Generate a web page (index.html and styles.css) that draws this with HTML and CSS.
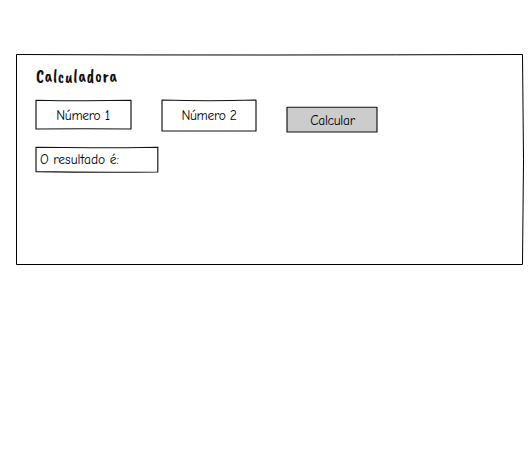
FILE: index.html
```
<!DOCTYPE html>
<html lang="pt">
<head>
<meta charset="utf-8">
<title>Calculadora</title>
<link rel="stylesheet" href="styles.css">
</head>
<body>
<main class="panel">
  <svg class="outline" viewBox="0 0 508 212"><path d="M.5 .5Q127 1.100 253 1T506.500 .5Q508.500 105 506.500 210.500H.5Z"/></svg>
  <h1 class="title">Calculadora</h1>
  <div class="row">
    <div class="box first"><svg class="outline" viewBox="0 0 96 30"><path d="M1 .2Q48 1.300 96 .3V29Q48 28.500 1 29Z"/></svg><span class="label">Número 1</span></div>
    <div class="box second"><svg class="outline" viewBox="0 0 95 32"><path d="M1 0Q47 1.500 95 0V31H1Z"/></svg><span class="label">Número 2</span></div>
    <button class="box calculate"><svg class="outline" viewBox="0 0 91 26"><path d="M1 .2H91V25H1Z"/></svg><span class="label">Calcular</span></button>
  </div>
  <div class="box result"><svg class="outline" viewBox="0 0 123 26"><path d="M1 .3Q61 1.200 122.800 .2V25Q61 25.700 1 24.600Z"/></svg><span class="label">O resultado é:</span></div>
</main>
</body>
</html>
```
FILE: styles.css
```
* { box-sizing: border-box; }
body { margin: 0; background: #fff; color: #111; font-family: "Comic Neue", "Comic Sans MS", "Open Sans", sans-serif; }
.panel { position: relative; width: 508px; height: 212px; margin: 54px 0 0 16px; padding: 11px 19px; }
.outline { position: absolute; inset: 0; width: 100%; height: 100%; overflow: visible; fill: none; stroke: #111; stroke-width: 1.15; stroke-linejoin: round; }
.panel > .outline { stroke: #000; stroke-width: 1; }
.title { margin: 0 0 0 1px; height: 34px; font: 400 18px/22px "Caveat Brush", "Open Sans", sans-serif; letter-spacing: .58px; }
.row { display: flex; align-items: flex-start; height: 48px; }
.box { position: relative; display: flex; align-items: center; justify-content: center; padding: 0; border: 0; background: none; color: #000; font: 13.5px/18px "Comic Neue", "Comic Sans MS", "Open Sans", sans-serif; letter-spacing: -.3px; }
.label { position: relative; white-space: nowrap; }
.first { width: 96px; height: 30px; margin-top: 1px; padding-top: 1px; }
.second { width: 95px; height: 32px; margin: 1px 0 0 30px; padding-left: 1px; }
.calculate { width: 91px; height: 26px; margin: 8px 0 0 30px; padding: 1px 0 0 2px; }
.calculate .outline { fill: #ccc; }
.result { width: 123px; height: 26px; justify-content: flex-start; padding-left: 5px; letter-spacing: 0; }
```
